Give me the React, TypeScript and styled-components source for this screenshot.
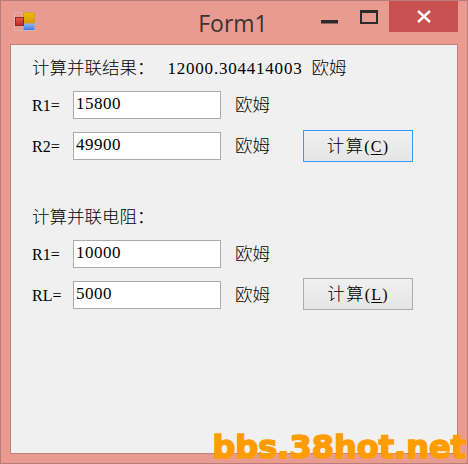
import React from "react";
import styled, { createGlobalStyle } from "styled-components";

const Global = createGlobalStyle`
  html, body { margin: 0; padding: 0; background: #e99b90; }
  #root { width: 468px; height: 464px; }
`;

const textFont = `"Liberation Serif", "Noto Sans CJK SC", serif`;

const Frame = styled.div`
  position: relative;
  box-sizing: border-box;
  width: 468px;
  height: 464px;
  display: flex;
  flex-direction: column;
  background: #e99b90;
  border: 1px solid #b87d78;
  overflow: hidden;
`;

const TitleBar = styled.div`
  position: relative;
  height: 43px;
  flex: none;
  display: flex;
  justify-content: center;
`;

const AppIcon = styled.svg`
  position: absolute;
  left: 13px;
  top: 10px;
`;

const Title = styled.div`
  font: 23px/44px "Open Sans", sans-serif;
  color: #3a3432;
  margin-left: -2px;
`;

const Controls = styled.div`
  position: absolute;
  right: 9px;
  top: 0;
  display: flex;
  align-items: flex-start;
`;

const ControlButton = styled.button<{ $close?: boolean; $w: number; $offset?: number }>`
  width: ${(p) => p.$w}px;
  height: 31px;
  padding: ${(p) => p.$offset ?? 0}px 0 0;
  border: 0;
  display: flex;
  align-items: center;
  justify-content: center;
  background: ${(p) => (p.$close ? "#c75050" : "transparent")};
`;

const Client = styled.div`
  box-sizing: border-box;
  width: 448px;
  height: 410px;
  margin-left: 9px;
  padding: 9px 0 0 21px;
  background: #f0f0f0;
  border: 1px solid #c57f78;
  display: flex;
  flex-direction: column;
  gap: 9px;
  font: 16px ${textFont};
  color: #000;
`;

const Heading = styled.div<{ $top?: number }>`
  height: 26px;
  line-height: 26px;
  margin-top: ${(p) => p.$top ?? 0}px;
  white-space: pre;
`;

const Cjk = styled.span`
  font-size: 17.5px;
  font-family: "Noto Sans CJK SC", serif;
  font-weight: 300;
`;

const ResultValue = styled.span`
  display: inline-block;
  width: 140px;
  margin-left: 13px;
  font-size: 17px;
  letter-spacing: 0.78px;
`;

const Row = styled.div`
  height: 32px;
  display: flex;
  align-items: center;
`;

const Label = styled.label`
  width: 41px;
  flex: none;
  line-height: 20px;
  padding-top: 1px;
`;

const Field = styled.input`
  box-sizing: border-box;
  width: 148px;
  height: 28px;
  flex: none;
  padding: 0 0 3px 2px;
  border: 1px solid #ababab;
  background: #fff;
  font: 17px ${textFont};
  letter-spacing: 0.5px;
  color: #000;
  outline: none;
`;

const Unit = styled.div`
  width: 68px;
  margin: 0 0 3px 14px;
  flex: none;
`;

const ActionButton = styled.button<{ $focused?: boolean }>`
  box-sizing: border-box;
  width: 110px;
  height: 32px;
  padding: 0 0 3px;
  margin-bottom: ${(p) => (p.$focused ? 0 : 2)}px;
  border: 1px solid ${(p) => (p.$focused ? "#3399ff" : "#acacac")};
  background: linear-gradient(#f0f0f0, #e5e5e5);
  font: 16px ${textFont};
  letter-spacing: 1.2px;
  color: #000;
  u { text-underline-offset: 2px; }
`;

const Watermark = styled.div`
  position: absolute;
  right: 1px;
  bottom: 1px;
  font: bold 32px/30px "DejaVu Sans", sans-serif;
  color: #ff9c00;
  -webkit-text-stroke: 1.6px #ff9c00;
  white-space: nowrap;
`;

function InputRow({ label, value, action, hot, focused }: { label: string; value: string; action?: boolean; hot?: string; focused?: boolean }) {
  return (
    <Row>
      <Label>{label}</Label>
      <Field defaultValue={value} readOnly />
      <Unit><Cjk>欧姆</Cjk></Unit>
      {action && (
        <ActionButton $focused={focused}>
          <Cjk>计算</Cjk>(<u>{hot}</u>)
        </ActionButton>
      )}
    </Row>
  );
}

export default function App() {
  return (
    <>
      <Global />
      <Frame>
        <TitleBar>
          <AppIcon width="22" height="20" viewBox="0 0 22 20">
            <defs>
              <linearGradient id="ya" x1="0" y1="0" x2="0" y2="1">
                <stop offset="0" stopColor="#f0bc10" />
                <stop offset="1" stopColor="#d89a00" />
              </linearGradient>
              <linearGradient id="bl" x1="0" y1="0" x2="0" y2="1">
                <stop offset="0" stopColor="#8fb8f5" />
                <stop offset="1" stopColor="#3f78e0" />
              </linearGradient>
              <linearGradient id="rd" x1="0" y1="0" x2="0" y2="1">
                <stop offset="0" stopColor="#e85a50" />
                <stop offset="1" stopColor="#b82a28" />
              </linearGradient>
            </defs>
            <g fill="none" stroke="#d9b3ad" strokeWidth="1">
              <rect x="0.5" y="1.5" width="20" height="18" />
              <path d="M9 1.5v18M0.5 10h20" />
            </g>
            <rect x="9.5" y="1.5" width="11" height="11" fill="url(#ya)" stroke="#b88a20" strokeWidth="0.5" />
            <rect x="9.5" y="12.5" width="11" height="6.5" fill="url(#bl)" />
            <rect x="1.5" y="6.5" width="8" height="8" fill="url(#rd)" stroke="#8a2a28" />
          </AppIcon>
          <Title>Form1</Title>
          <Controls>
            <ControlButton $w={39} $offset={11}>
              <svg width="17" height="4" viewBox="0 0 17 4"><rect width="17" height="3.5" fill="#2b2b2b" /></svg>
            </ControlButton>
            <ControlButton $w={40}>
              <svg width="18" height="14" viewBox="0 0 18 14"><rect x="1" y="1" width="16" height="12" fill="none" stroke="#2b2b2b" strokeWidth="2" /><rect x="1" y="1" width="16" height="2" fill="#2b2b2b" /></svg>
            </ControlButton>
            <ControlButton $w={69} $close>
              <svg width="14" height="13" viewBox="0 0 14 13"><path d="M1 1l12 11M13 1L1 12" stroke="#fff" strokeWidth="2.4" fill="none" /></svg>
            </ControlButton>
          </Controls>
        </TitleBar>
        <Client>
          <Heading><Cjk>计算并联结果：</Cjk><ResultValue>12000.304414003</ResultValue> <Cjk>欧姆</Cjk></Heading>
          <InputRow label="R1=" value="15800" />
          <InputRow label="R2=" value="49900" action hot="C" focused />
          <Heading $top={32}><Cjk>计算并联电阻：</Cjk></Heading>
          <InputRow label="R1=" value="10000" />
          <InputRow label="RL=" value="5000" action hot="L" />
        </Client>
        <Watermark>bbs.38hot.net</Watermark>
      </Frame>
    </>
  );
}
